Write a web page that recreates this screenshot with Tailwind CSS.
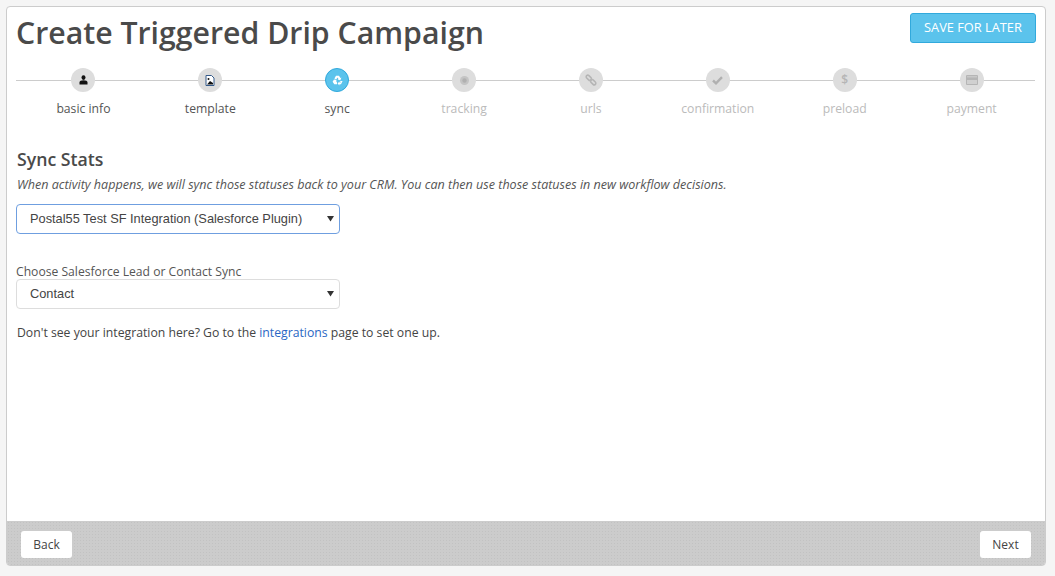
<!DOCTYPE html>
<html lang="en">
<head>
    <meta charset="UTF-8">
    <title>Create Triggered Drip Campaign</title>
    <script src="https://cdn.jsdelivr.net/npm/@tailwindcss/browser@4"></script>
</head>
<body class="bg-[#f5f5f5] h-[576px] overflow-hidden pt-[6px] pl-[6px] pr-[9px] font-['Open_Sans',sans-serif] text-[#444]">
    <div class="bg-white border border-[#ccc] rounded-[4px] h-[560px] flex flex-col overflow-hidden">
        <div class="flex-1 pl-[9px] pr-[10px]">
            <!-- header -->
            <div class="flex justify-between items-start">
                <h1 class="text-[30.25px] leading-[40px] mt-[6px] font-semibold text-[#4a4a4a]">Create Triggered Drip Campaign</h1>
                <button class="mt-[6px] w-[126px] h-[30px] -mr-px bg-[#5bc3ec] border border-[#31a9dc] rounded-[3px] text-white text-[12.8px] font-['Open_Sans',sans-serif]">SAVE FOR LATER</button>
            </div>

            <!-- steps -->
            <div class="relative mt-[15px]">
                <div class="absolute left-0 right-0 top-[12px] h-px bg-[#ccc]"></div>
                <div class="relative grid grid-cols-8 pl-[4px]">
                    <div class="flex flex-col items-center gap-[7px]">
                        <div class="w-[24px] h-[24px] rounded-full bg-[#ddd] flex items-center justify-center">
                            <svg width="9" height="10" viewBox="0 0 9 10"><ellipse cx="4.500" cy="2.600" rx="2" ry="2.400" fill="#111"/><path d="M.5 9.500V7.500C.5 6 2 5.200 4.500 5.200S8.500 6 8.500 7.500V9.500Z" fill="#111"/></svg>
                        </div>
                        <span class="text-[12.2px] leading-[20px] text-[#555]">basic info</span>
                    </div>
                    <div class="flex flex-col items-center gap-[7px]">
                        <div class="w-[24px] h-[24px] rounded-full bg-[#ddd] flex items-center justify-center">
                            <svg width="10" height="11" viewBox="0 0 10 11"><path d="M1 .5H6.500L9 3V10.500H1Z" fill="#fff" stroke="#345a8a" stroke-width="1"/><circle cx="3.500" cy="4" r="1" fill="#111"/><path d="M2 9.500 5 6l3 2v1.500Z" fill="#111"/></svg>
                        </div>
                        <span class="text-[12.2px] leading-[20px] text-[#555]">template</span>
                    </div>
                    <div class="flex flex-col items-center gap-[7px]">
                        <div class="w-[24px] h-[24px] rounded-full bg-[#5bc3ec] border border-[#31a9dc] flex items-center justify-center">
                            <svg width="11" height="11" viewBox="0 0 11 11" fill="#fff"><path d="M4 .8H7L8.400 3 9.400 2.400 8.400 5.200 5.600 4.800 6.600 4.200 5.500 2.400 4.200 4.600 2.400 3.500Z"/><path d="M2 4.400 4.700 5 4.100 5.900 5 7.500V9.300H2.300L.6 6.700Z"/><path d="M10.600 6 9 9.300H7.400V10.500L5.600 8.400 7.400 6.500V7.500H8.800L8 6Z"/></svg>
                        </div>
                        <span class="text-[12.2px] leading-[20px] text-[#555]">sync</span>
                    </div>
                    <div class="flex flex-col items-center gap-[7px]">
                        <div class="w-[24px] h-[24px] rounded-full bg-[#ddd] flex items-center justify-center">
                            <svg width="11" height="11" viewBox="0 0 11 11"><circle cx="5.500" cy="5.500" r="4.500" fill="#c4c4c4"/><circle cx="5.500" cy="5.500" r="2.200" fill="#b0b0b0"/></svg>
                        </div>
                        <span class="text-[12.2px] leading-[20px] text-[#bbb]">tracking</span>
                    </div>
                    <div class="flex flex-col items-center gap-[7px]">
                        <div class="w-[24px] h-[24px] rounded-full bg-[#ddd] flex items-center justify-center">
                            <svg width="12" height="12" viewBox="0 0 12 12" fill="none" stroke="#b5b5b5" stroke-width="1.6"><rect x="-3" y="-1.600" width="6" height="3.200" rx="1.600" transform="translate(3.800 3.800) rotate(45)"/><rect x="-3" y="-1.600" width="6" height="3.200" rx="1.600" transform="translate(8.200 8.200) rotate(45)"/></svg>
                        </div>
                        <span class="text-[12.2px] leading-[20px] text-[#bbb]">urls</span>
                    </div>
                    <div class="flex flex-col items-center gap-[7px]">
                        <div class="w-[24px] h-[24px] rounded-full bg-[#ddd] flex items-center justify-center">
                            <svg width="11" height="9" viewBox="0 0 11 9" fill="none" stroke="#b0b0b0" stroke-width="2.400"><path d="M1 4.500 4 7.300 10 1.200"/></svg>
                        </div>
                        <span class="text-[12.2px] leading-[20px] text-[#bbb]">confirmation</span>
                    </div>
                    <div class="flex flex-col items-center gap-[7px]">
                        <div class="w-[24px] h-[24px] rounded-full bg-[#ddd] flex items-center justify-center text-[12px] leading-none font-semibold text-[#b5b5b5]">$</div>
                        <span class="text-[12.2px] leading-[20px] text-[#bbb]">preload</span>
                    </div>
                    <div class="flex flex-col items-center gap-[7px]">
                        <div class="w-[24px] h-[24px] rounded-full bg-[#ddd] flex items-center justify-center">
                            <svg width="12" height="10" viewBox="0 0 12 10"><rect width="12" height="10" rx="1" fill="#b5b5b5"/><rect x="1" y="1" width="10" height="1.500" fill="#c8c8c8"/><rect x="1" y="5" width="10" height="4" fill="#d0d0d0"/></svg>
                        </div>
                        <span class="text-[12.2px] leading-[20px] text-[#bbb]">payment</span>
                    </div>
                </div>
            </div>

            <!-- form -->
            <h2 class="mt-[28px] pl-[1px] text-[17.7px] leading-[24px] font-semibold text-[#4a4a4a]">Sync Stats</h2>
            <p class="mt-[4px] pl-[1px] text-[12.55px] leading-[20px] italic text-[#555]">When activity happens, we will sync those statuses back to your CRM. You can then use those statuses in new workflow decisions.</p>
            <div class="relative mt-[9px] w-[324px]">
                <select class="block appearance-none w-full h-[30px] pl-[13px] bg-white border border-[#6f9fe0] rounded-[4px] text-[12.8px] text-[#444] font-['Liberation_Sans',sans-serif]">
                    <option>Postal55 Test SF Integration (Salesforce Plugin)</option>
                </select>
                <svg class="absolute right-[6px] top-[11px]" width="7" height="7" viewBox="0 0 7 7"><path d="M0 1H7L3.500 6.500Z" fill="#333"/></svg>
            </div>
            <label class="block mt-[31px] text-[12.15px] leading-[14px] text-[#555]">Choose Salesforce Lead or Contact Sync</label>
            <div class="relative w-[324px]">
                <select class="block appearance-none w-full h-[30px] pl-[13px] bg-white border border-[#ddd] rounded-[4px] text-[12.8px] text-[#444] font-['Liberation_Sans',sans-serif]">
                    <option>Contact</option>
                </select>
                <svg class="absolute right-[6px] top-[11px]" width="7" height="7" viewBox="0 0 7 7"><path d="M0 1H7L3.500 6.500Z" fill="#333"/></svg>
            </div>
            <p class="mt-[15px] pl-[1px] text-[12.22px] leading-[18px] text-[#444]">Don't see your integration here? Go to the <a href="#" class="text-[#2a67c4]">integrations</a> page to set one up.</p>
        </div>

        <!-- footer -->
        <div class="h-[44px] bg-[#ccc] bg-[radial-gradient(#c2c2c2_0.7px,transparent_0.8px)] bg-size-[3px_3px] flex justify-between items-start pt-[10px] pl-[14px] pr-[14px]">
            <button class="w-[51px] h-[27px] bg-white rounded-[3px] text-[12px] text-[#444]">Back</button>
            <button class="w-[51px] h-[27px] bg-white rounded-[3px] text-[12px] text-[#444]">Next</button>
        </div>
    </div>
</body>
</html>
